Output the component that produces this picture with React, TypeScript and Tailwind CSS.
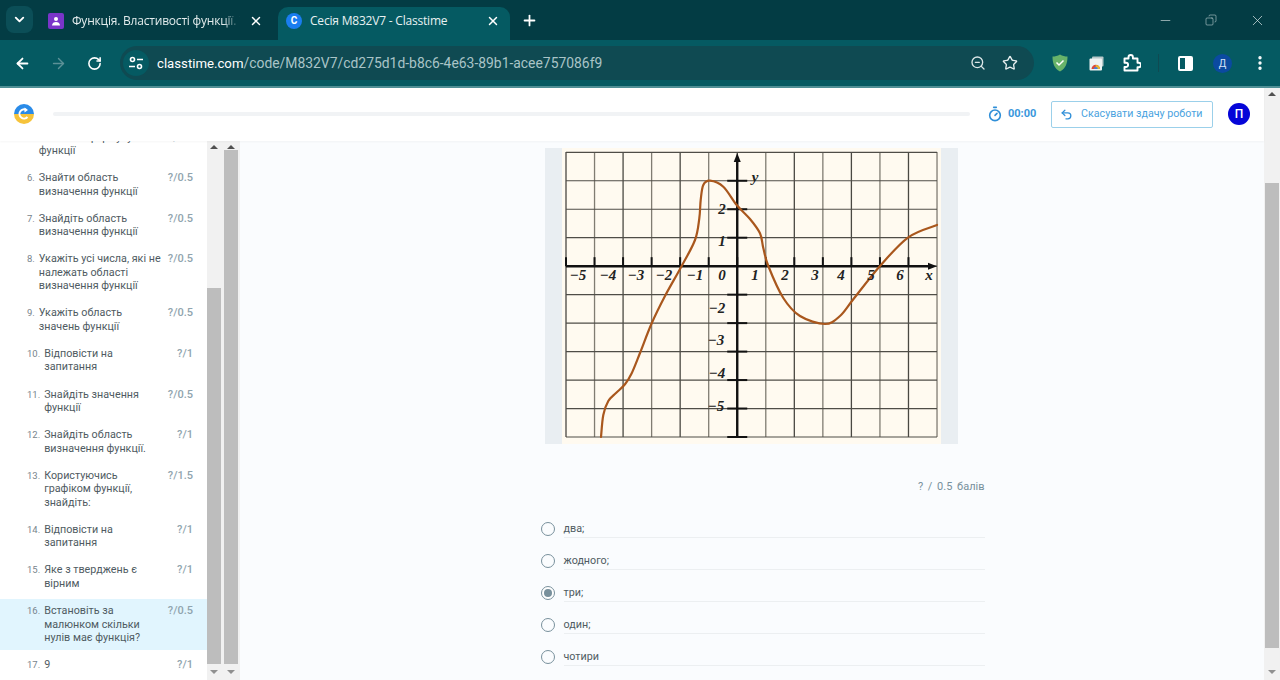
import { ArrowLeft, ArrowRight, ChevronDown, Copy, EllipsisVertical, Minus, Plus, RotateCw, Star, Timer, Undo2, X, ZoomOut } from 'lucide-react'

interface Question {
  n: number
  title: string[]
  score: string
  active?: boolean
}

const questions: Question[] = [
  { n: 5, title: ['Визначте формулу', 'функції'], score: '?/0.5' },
  { n: 6, title: ['Знайти область', 'визначення функції'], score: '?/0.5' },
  { n: 7, title: ['Знайдіть область', 'визначення функції'], score: '?/0.5' },
  { n: 8, title: ['Укажіть усі числа, які не', 'належать області', 'визначення функції'], score: '?/0.5' },
  { n: 9, title: ['Укажіть область', 'значень функції'], score: '?/0.5' },
  { n: 10, title: ['Відповісти на', 'запитання'], score: '?/1' },
  { n: 11, title: ['Знайдіть значення', 'функції'], score: '?/0.5' },
  { n: 12, title: ['Знайдіть область', 'визначення функції.'], score: '?/1' },
  { n: 13, title: ['Користуючись', 'графіком функції,', 'знайдіть:'], score: '?/1.5' },
  { n: 14, title: ['Відповісти на', 'запитання'], score: '?/1' },
  { n: 15, title: ['Яке з тверджень є', 'вірним'], score: '?/1' },
  { n: 16, title: ['Встановіть за', 'малюнком скільки', 'нулів має функція?'], score: '?/0.5', active: true },
  { n: 17, title: ['9'], score: '?/1' },
]

const options = [
  { label: 'два;' },
  { label: 'жодного;' },
  { label: 'три;', checked: true },
  { label: 'один;' },
  { label: 'чотири' },
]

// grid of the plot, in page coordinates
const gridX = Array.from({ length: 14 }, (_, i) => 566 + i * 28.54)
const gridY = Array.from({ length: 11 }, (_, i) => 152.3 + i * 28.47)
const axisX = gridX[6]
const axisY = gridY[4]

const curve: [number, number][] = [
  [601, 437], [603.3, 415], [608.3, 401], [616, 393], [625, 384.3], [631.7, 373.3], [640, 353], [651.7, 323.3],
  [665, 296], [681.7, 266], [695, 240], [699.3, 218.3], [700.7, 200], [703.3, 185], [710, 180.7], [723.3, 186.7],
  [736.7, 205], [750, 219], [760, 233.3], [763.3, 248], [768.3, 266], [783.3, 298], [800, 316], [825, 324],
  [840, 316], [853.3, 299.3], [880, 266], [908.3, 237.3], [937, 225],
]

// catmull-rom through the traced points
const curvePath = curve.reduce((d, p, i) => {
  if (i === 0) return `M${p[0]} ${p[1]}`
  const a = curve[i - 2] ?? curve[i - 1]
  const b = curve[i - 1]
  const c = curve[i + 1] ?? p
  const c1x = b[0] + (p[0] - a[0]) / 6
  const c1y = b[1] + (p[1] - a[1]) / 6
  const c2x = p[0] - (c[0] - b[0]) / 6
  const c2y = p[1] - (c[1] - b[1]) / 6
  return `${d} C${c1x} ${c1y} ${c2x} ${c2y} ${p[0]} ${p[1]}`
}, '')

const labels: [string, number, number][] = [
  ['−5', 578, 280], ['−4', 608, 280], ['−3', 636, 280], ['−2', 664, 280], ['−1', 695, 280], ['0', 722, 280],
  ['1', 755, 280], ['2', 785, 280], ['3', 815, 280], ['4', 841, 280], ['5', 871, 280], ['6', 900, 280], ['x', 929, 280],
  ['y', 755, 182], ['2', 722, 214], ['1', 722, 246], ['−2', 717, 313], ['−3', 716, 345], ['−4', 717, 378], ['−5', 716, 411],
]

function Plot() {
  return (
    <svg width="379" height="296" viewBox="562 148 379 296" className="block">
      <rect x="562" y="148" width="379" height="296" fill="#fffaf0" />
      {gridX.map(x => (
        <line key={x} x1={x} x2={x} y1="152" y2="437" stroke={Math.round((x - 566) / 28.54) % 2 === 0 ? '#4a4842' : '#807c72'} strokeWidth="1.3" />
      ))}
      {gridY.map(y => (
        <line key={y} x1="566" x2="937" y1={y} y2={y} stroke="#4f4d47" strokeWidth="1.2" />
      ))}
      <line x1="566" x2="930" y1={axisY} y2={axisY} stroke="#111" strokeWidth="2.4" />
      <path d={`M937 ${axisY} L928 ${axisY - 3.5} L928 ${axisY + 3.5} Z`} fill="#111" />
      <line x1={axisX} x2={axisX} y1="160" y2="437" stroke="#111" strokeWidth="2.4" />
      <path d={`M${axisX} 153 L${axisX - 3.5} 162 L${axisX + 3.5} 162 Z`} fill="#111" />
      {gridX.slice(0, 13).map(x => (
        <line key={x} x1={x} x2={x} y1={axisY - 9} y2={axisY} stroke="#111" strokeWidth="2" />
      ))}
      {gridY.filter(y => y !== axisY && y !== gridY[0]).map(y => (
        <line key={y} x1={axisX - 10} x2={axisX + 10} y1={y} y2={y} stroke="#111" strokeWidth="2" />
      ))}
      <path d={curvePath} fill="none" stroke="#a9571d" strokeWidth="2.2" strokeLinecap="round" />
      {labels.map(([t, x, y]) => (
        <text key={t + x + y} x={x} y={y} textAnchor="middle" fontSize="15" fontWeight="700" fontStyle="italic" fontFamily="'Liberation Serif', serif" fill="#222">
          {t}
        </text>
      ))}
    </svg>
  )
}

function BrowserChrome() {
  return (
    <div className="shrink-0 font-['Roboto',sans-serif]">
      {/* Tab strip */}
      <div className="h-10 bg-[#033c44] flex items-end relative">
        <div className="w-[27px] h-[27px] ml-1.5 mb-[7px] rounded-lg bg-[#0b4e57] flex items-center justify-center">
          <ChevronDown size={15} strokeWidth={3} className="text-white" />
        </div>
        <div className="w-[245px] h-[33px] flex items-center pl-[15px] pb-1.5">
          <div className="w-4 h-4 rounded-[2px] bg-[#7a35c9] flex items-center justify-center shrink-0">
            <svg width="10" height="10" viewBox="0 0 10 10">
              <circle cx="5" cy="3" r="2" fill="#fff" />
              <path d="M1 9.5c0-2.5 2-3.5 4-3.5s4 1 4 3.5z" fill="#fff" />
            </svg>
          </div>
          <span className="ml-2 w-[168px] overflow-hidden whitespace-nowrap text-[12px] tracking-[-0.2px] font-['Open_Sans',sans-serif] text-[#e3eced] [mask-image:linear-gradient(to_right,black_90%,transparent)]">Функція. Властивості функції. Т</span>
          <X size={14} strokeWidth={2.5} className="ml-[9px] text-white shrink-0" />
        </div>
        <div className="w-[232px] h-[33px] rounded-t-[10px] bg-[#055a62] flex items-center pl-2 pb-1.5">
          <div className="w-4 h-4 rounded-full bg-[#1a7df0] flex items-center justify-center shrink-0">
            <span className="text-[10px] font-bold text-white leading-none">C</span>
          </div>
          <span className="ml-2 w-[176px] whitespace-nowrap text-[12px] tracking-[-0.2px] font-['Open_Sans',sans-serif] text-[#e8f1f2]">Сесія M832V7 - Classtime</span>
          <X size={14} strokeWidth={2.5} className="text-white shrink-0" />
        </div>
        <Plus size={17} strokeWidth={2.5} className="ml-[11px] mb-[11px] text-white" />
        <div className="ml-auto flex items-center h-10 text-[#dfe9ea]">
          <Minus size={15} strokeWidth={1} className="mr-[32px]" />
          <Copy size={12} strokeWidth={1} className="mr-[32px] -scale-x-100" />
          <X size={17} strokeWidth={1} className="mr-[14px]" />
        </div>
      </div>

      {/* Toolbar */}
      <div className="h-12 bg-[#055a62] border-b-2 border-[#4f8f95] flex items-center">
        <ArrowLeft size={17} strokeWidth={2.5} className="ml-3.5 text-white" />
        <ArrowRight size={17} strokeWidth={2} className="ml-[19px] text-[#5c9197]" />
        <RotateCw size={15} strokeWidth={2.5} className="ml-[20px] text-white" />
        <div className="ml-[18px] w-[914px] h-[34px] rounded-full bg-[#0f4a52] flex items-center">
          <div className="ml-[3px] w-[26px] h-[26px] rounded-full bg-[#055a62] flex items-center justify-center">
            <svg width="14" height="14" viewBox="0 0 14 14" fill="none" stroke="#fff" strokeWidth="1.6">
              <circle cx="3.5" cy="3.5" r="2" />
              <path d="M8 3.500h6M0 10.500h6" />
              <circle cx="10.500" cy="10.500" r="2" />
            </svg>
          </div>
          <span className="ml-2 text-[13.2px] text-white whitespace-nowrap">
            classtime.com<span className="text-[13.9px] text-[#a9c4c7]">/code/M832V7/cd275d1d-b8c6-4e63-89b1-acee757086f9</span>
          </span>
          <ZoomOut size={16} strokeWidth={2} className="ml-auto text-[#dbe6e7]" />
          <Star size={16} strokeWidth={2} className="ml-[16px] mr-4 text-[#e6eeef]" />
        </div>
        <svg width="16" height="18" viewBox="0 0 16 18" className="ml-[18px]">
          <path d="M8 0.5C5.5 2 3 2.5 0.5 2.5c0 6 1.5 12 7.5 15 6-3 7.5-9 7.5-15C13 2.5 10.500 2 8 0.5z" fill="#67b36a" />
          <path d="M4.500 8.500l2.500 2.500 4.500-4.500" fill="none" stroke="#fff" strokeWidth="1.5" />
        </svg>
        <svg width="15" height="15" viewBox="0 0 15 15" className="ml-[21px]">
          <rect x="3" y="0.500" width="11.500" height="10" rx="1" fill="#b7c7c9" />
          <rect x="0.500" y="2.500" width="12.500" height="12" rx="1" fill="#eef2f2" />
          <path d="M2.500 13a4.200 4.200 0 0 1 8.500 0z" fill="#d9483b" />
          <path d="M6.700 13v-4a4.200 4.200 0 0 1 4.300 4z" fill="#e7b62b" />
          <path d="M4.800 13a2 2 0 0 1 4 0z" fill="#3f7fe0" />
        </svg>
        <svg width="18" height="18" viewBox="0 0 18 18" className="ml-[19px]">
          <path d="M1.500 4.500h4V3.200a2.200 2.200 0 0 1 4.400 0v1.300h4.600v4.300h1.200a2.200 2.200 0 0 1 0 4.400h-1.200v3.300h-13v-3.500h1.500a2.100 2.100 0 0 0 0-4.200H1.500z" fill="none" stroke="#fff" strokeWidth="1.900" strokeLinejoin="round" />
        </svg>
        <div className="ml-[17px] w-px h-[18px] bg-[#0f4a52]" />
        <div className="ml-[19px] w-[15px] h-[15px] rounded-[2px] border-2 border-white flex justify-end">
          <div className="w-[6px] bg-white" />
        </div>
        <div className="ml-[20px] w-[19px] h-[19px] rounded-full bg-[#0b4aa0] flex items-center justify-center text-[10px] text-[#d5e3f7]">Д</div>
        <EllipsisVertical size={18} strokeWidth={2.5} className="ml-[19px] text-white" />
      </div>
    </div>
  )
}

function Header() {
  return (
    <div className="h-[53px] pb-px shrink-0 bg-white flex items-center relative z-10 shadow-[0_1px_2px_rgba(0,0,0,0.04)]">
      <svg width="20" height="20" viewBox="0 0 20 20" className="ml-3.5 shrink-0">
        <path d="M0 10a10 10 0 0 1 20 0z" fill="#2a8be8" />
        <path d="M0 10a10 10 0 0 0 20 0z" fill="#f6c33b" />
        <path d="M13.500 13a4.600 4.600 0 1 1-1-7" fill="none" stroke="#fff" strokeWidth="2" />
        <path d="M10.500 3.500l3.500 2.500-3.500 2.500z" fill="#fff" />
      </svg>
      <div className="ml-[19px] w-[917px] h-1 rounded-full bg-[#f1f3f5]" />
      <Timer size={16} strokeWidth={2.4} className="ml-[17px] text-[#2f8fd8]" />
      <span className="ml-[5px] w-[28px] text-[11px] font-bold text-[#3a97dc] whitespace-nowrap font-['Roboto',sans-serif]">00:00</span>
      <button className="ml-[15px] w-[162px] h-[27px] border border-[#9bd0ea] rounded-[2px] flex items-center pl-2 text-[10.7px] text-[#4ba3e0] font-['Roboto',sans-serif]">
        <Undo2 size={13} strokeWidth={2.4} className="text-[#2f8fd8]" />
        <span className="ml-2 whitespace-nowrap">Скасувати здачу роботи</span>
      </button>
      <div className="ml-[15px] w-[22px] h-[22px] rounded-full bg-[#0505d8] flex items-center justify-center text-xs font-medium text-white font-['Roboto',sans-serif]">П</div>
    </div>
  )
}

function Scrollbar({ thumbTop, thumbBottom, width }: { thumbTop: string; thumbBottom: string; width: string }) {
  return (
    <div className={`${width} shrink-0 bg-[#f1f1f1] flex flex-col items-center`}>
      <div className="h-0 mt-[4px] border-x-[4px] border-x-transparent border-b-[4px] border-b-[#505050]" />
      <div className={`w-[14px] bg-[#bdbdbd] ${thumbTop} ${thumbBottom}`} />
      <div className="h-0 mt-auto mb-[6px] border-x-[4px] border-x-transparent border-t-[4px] border-t-[#909090]" />
    </div>
  )
}

function Sidebar() {
  return (
    <div className="w-[240px] shrink-0 flex bg-white overflow-hidden">
      <div className="w-[207px] shrink-0 overflow-hidden">
        <div className="-mt-[15.5px] flex flex-col gap-[3.6px]">
          {questions.map(q => (
            <div key={q.n} className={`flex py-[5px] pl-[27px] pr-[14px] text-[10.75px] leading-[13.5px] ${q.active ? 'bg-[#e1f5fe]' : ''}`}>
              <span className="text-[9.5px] mr-[4px] text-[#78848c]">{q.n}.</span>
              <div className="flex-1 text-[#4f5b62] whitespace-nowrap">
                {q.title.map(line => <div key={line}>{line}</div>)}
              </div>
              <span className="text-[11px] text-[#90a4ae] font-medium">{q.score}</span>
            </div>
          ))}
        </div>
      </div>
      <Scrollbar width="w-[14px]" thumbTop="mt-[139px]" thumbBottom="h-[376px]" />
      <Scrollbar width="w-[19px]" thumbTop="mt-[1px]" thumbBottom="h-[514px]" />
    </div>
  )
}

export default function App() {
  return (
    <div className="w-[1280px] h-[680px] overflow-hidden flex flex-col font-['Roboto',sans-serif]">
      <BrowserChrome />
      <div className="flex-1 min-h-0 flex">
        <div className="flex-1 min-w-0 flex flex-col">
          <Header />
          <div className="flex-1 min-h-0 flex">
            <Sidebar />
            <main className="flex-1 min-w-0 bg-[#fafcfe] overflow-hidden flex flex-col items-center pt-[7px] pr-px">
              <div className="bg-[#e9eef2] px-[17px] shrink-0">
                <Plot />
              </div>
              <div className="w-[466px] shrink-0">
                <div className="mt-[36px] text-right text-[11px] leading-[14px] text-[#78909c] [word-spacing:2px]">? / 0.5 балів</div>
                <div className="mt-[12px] flex flex-col">
                  {options.map(o => (
                    <div key={o.label} className="h-8 flex items-end pl-[22px]">
                      <span className={`mb-[2px] w-[14px] h-[14px] rounded-full border-[1.5px] border-[#78909c] flex items-center justify-center shrink-0 ${o.checked ? 'bg-white' : ''}`}>
                        {o.checked && <span className="w-2 h-2 rounded-full bg-[#78909c]" />}
                      </span>
                      <div className="ml-[9px] flex-1 flex items-center pb-px leading-[14px] border-b border-[#eceff1] text-[10.75px] text-[#4f5b62]">{o.label}</div>
                    </div>
                  ))}
                </div>
              </div>
            </main>
          </div>
        </div>
        <Scrollbar width="w-4" thumbTop="mt-[87px]" thumbBottom="h-[465px]" />
      </div>
    </div>
  )
}
